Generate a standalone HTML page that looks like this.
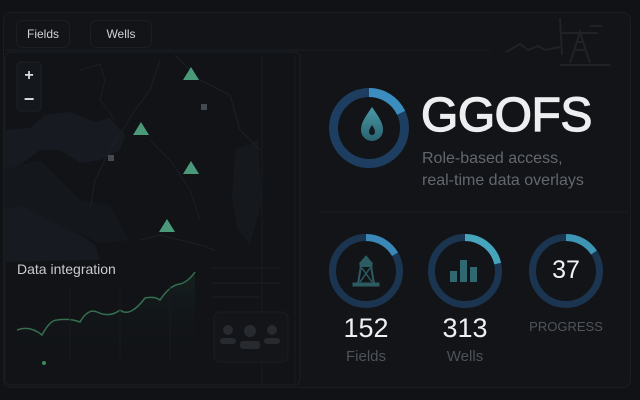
<!DOCTYPE html>
<html><head><meta charset="utf-8"><style>
html,body{margin:0;padding:0;width:640px;height:400px;overflow:hidden;background:#101215;font-family:"Liberation Sans",sans-serif;}
.abs{position:absolute}
</style></head><body>
<div class="abs" style="left:3px;top:12px;width:626px;height:374px;border:1px solid #1a1e23;border-radius:8px;background:#121418"></div>
<svg class="abs" style="left:0;top:0" width="640" height="400" viewBox="0 0 640 400">
  <defs>
    <linearGradient id="dg" x1="0" y1="0" x2="0" y2="1"><stop offset="0" stop-color="#4a9aa6"/><stop offset="1" stop-color="#2a6270"/></linearGradient>
    <linearGradient id="fc" x1="0" y1="0" x2="0" y2="1"><stop offset="0" stop-color="#1b3028" stop-opacity=".45"/><stop offset="1" stop-color="#121418" stop-opacity="0"/></linearGradient>
  </defs>
  <line x1="5" y1="50" x2="490" y2="50" stroke="#181c21"/>
  <rect x="5" y="52" width="295" height="333" rx="6" fill="#111317" stroke="#1b1f25"/>
  <path d="M5 130 L30 128 L45 115 L70 112 L95 122 L110 118 L125 135 L120 150 L100 160 L80 163 L60 150 L40 150 L20 165 L5 170 Z" fill="#171b21"/>
  <path d="M5 210 L25 200 L40 215 L60 225 L80 235 L95 245 L100 260 L5 262 Z" fill="#171b21"/>
  <path d="M5 170 L20 165 L40 160 L60 180 L80 200 L110 205 L120 225 L130 240 L100 243 L70 230 L40 215 L20 205 L5 210 Z" fill="#14171c"/>
  <path d="M235 150 L258 140 L262 200 L250 245 L238 230 L232 200 Z" fill="#15191e"/>
  <path d="M160 60 L150 90 L135 110 L110 150 L95 180 L90 210" fill="none" stroke="#1c2026" stroke-width="1"/>
  <path d="M175 55 L200 80 L230 95 L240 130 L260 150" fill="none" stroke="#1c2026"/>
  <path d="M80 70 L100 64 L105 80 L100 100 L115 120" fill="none" stroke="#1a1e24"/>
  <path d="M140 240 L160 235 L180 240 L200 245 L215 250" fill="none" stroke="#1c2026"/>
  <path d="M150 140 L170 160 L190 190 L200 220" fill="none" stroke="#1a1e24"/>
  <line x1="262" y1="55" x2="262" y2="385" stroke="#181c21"/>
  <line x1="295" y1="55" x2="295" y2="385" stroke="#181c21"/>
  <rect x="17" y="62" width="24" height="49" rx="4" fill="#14171b" stroke="#1d2127"/>
  <text x="29" y="80" fill="#d8dadd" font-size="16" font-weight="bold" text-anchor="middle">+</text>
  <text x="29" y="105" fill="#d8dadd" font-size="18" font-weight="bold" text-anchor="middle">−</text>
  <path d="M191 67 L199 80 L183 80 Z" fill="#4a9a7a"/>
  <path d="M141 122 L149 135 L133 135 Z" fill="#4a9a7a"/>
  <path d="M191 161 L199 174 L183 174 Z" fill="#4a9a7a"/>
  <path d="M167 219 L175 232 L159 232 Z" fill="#4a9a7a"/>
  <rect x="201" y="104" width="6" height="6" fill="#44494f"/>
  <rect x="108" y="155" width="6" height="6" fill="#44494f"/>
  <path d="M17 330 Q30 325 42 335 Q50 320 57 320 Q70 318 80 322 Q88 308 97 312 Q110 318 120 310 Q130 318 145 298 Q155 296 160 300 Q170 285 180 284 Q188 282 195 272 L195 355 L17 355 Z" fill="url(#fc)"/>
  <path d="M17 330 Q30 325 42 335 Q50 320 57 320 Q70 318 80 322 Q88 308 97 312 Q110 318 120 310 Q130 318 145 298 Q155 296 160 300 Q170 285 180 284 Q188 282 195 272" fill="none" stroke="#356f50" stroke-width="1.5"/>
  <line x1="70" y1="285" x2="70" y2="360" stroke="#171a1f"/><line x1="120" y1="285" x2="120" y2="360" stroke="#171a1f"/><line x1="170" y1="285" x2="170" y2="360" stroke="#171a1f"/>
  <circle cx="44" cy="363" r="2" fill="#3a8a58"/>
  <line x1="213" y1="268" x2="280" y2="268" stroke="#1c2026"/>
  <line x1="213" y1="283" x2="280" y2="283" stroke="#1c2026"/>
  <line x1="213" y1="297" x2="260" y2="297" stroke="#1c2026"/>
  <rect x="214" y="312" width="74" height="50" rx="6" fill="#131519" stroke="#1a1e23"/>
  <g fill="#272b30"><circle cx="228" cy="330" r="5"/><rect x="220" y="338" width="16" height="6" rx="3"/>
  <circle cx="250" cy="331" r="6"/><rect x="240" y="341" width="20" height="8" rx="3"/>
  <circle cx="272" cy="330" r="5"/><rect x="264" y="338" width="16" height="6" rx="3"/></g>
  <g stroke="#1f2328" fill="none" stroke-width="2">
    <path d="M506 52 L520 44 L528 50 L538 46 L545 50 L560 47"/>
    <path d="M560 18 L562 55"/><path d="M570 63 L580 32 L590 63 M574 50 L586 50 M576 42 L584 42"/>
    <path d="M560 33 L598 33"/><path d="M590 26 L602 26"/><path d="M560 65 L610 65"/>
  </g>
  <circle cx="369" cy="128" r="35.5" fill="none" stroke="#1d3e60" stroke-width="9"/>
  <circle cx="369" cy="128" r="35.5" fill="none" stroke="#3c8dbf" stroke-width="9" stroke-dasharray="40 223" transform="rotate(-90 369 128)"/>
  <path d="M372 107 C378 116 383 122 383 130 A11 11 0 0 1 361 130 C361 122 366 116 372 107 Z" fill="url(#dg)"/>
  <path d="M372 125 C374 128 375 130 375 132 A3 3 0 0 1 369 132 C369 130 370 128 372 125 Z" fill="#12181c"/>
  <line x1="320" y1="212" x2="628" y2="212" stroke="#181c21"/>
  <g fill="none" stroke-width="7">
    <circle cx="366" cy="271" r="33.5" stroke="#1b3550"/>
    <circle cx="366" cy="271" r="33.5" stroke="#3a88b8" stroke-dasharray="35 200" transform="rotate(-90 366 271)"/>
    <circle cx="465" cy="271" r="33.5" stroke="#1b3550"/>
    <circle cx="465" cy="271" r="33.5" stroke="#46a5bc" stroke-dasharray="45 200" transform="rotate(-90 465 271)"/>
    <circle cx="566" cy="271" r="33.5" stroke="#1b3550"/>
    <circle cx="566" cy="271" r="33.5" stroke="#3f96b4" stroke-dasharray="33 200" transform="rotate(-90 566 271)"/>
  </g>
  <g fill="#2c5c62" stroke="#2c5c62">
    <path d="M366 256 L372 263 L360 263 Z"/><rect x="360" y="263" width="12" height="3"/>
    <path d="M361 266 L371 266 L374 284 L358 284 Z" fill="none" stroke-width="2"/>
    <path d="M362 268 L372 282 M370 268 L360 282" stroke-width="1.5"/>
    <rect x="353" y="283" width="26" height="3"/>
  </g>
  <g fill="#2f6870"><rect x="450" y="271" width="7" height="11"/><rect x="460" y="260" width="7" height="22"/><rect x="470" y="267" width="7" height="15"/></g>
</svg>
<div class="abs" style="left:16px;top:20px;width:52px;height:26px;border:1px solid #1b1f25;border-radius:7px;color:#cfd2d6;font-size:12px;line-height:26px;text-align:center">Fields</div>
<div class="abs" style="left:90px;top:20px;width:60px;height:26px;border:1px solid #1b1f25;border-radius:7px;color:#cfd2d6;font-size:12px;line-height:26px;text-align:center">Wells</div>
<div class="abs" style="left:17px;top:261px;color:#c8cbcf;font-size:14px">Data integration</div>
<div class="abs" style="left:421px;top:91px;color:#eceef0;font-size:48px;-webkit-text-stroke:1.2px #eceef0;letter-spacing:-0.5px;line-height:50px">GGOFS</div>
<div class="abs" style="left:422px;top:148px;color:#63686f;font-size:16px;line-height:22px">Role-based access,<br>real-time data overlays</div>
<div class="abs" style="left:326px;top:313px;width:80px;text-align:center;color:#eef0f2;font-size:27px">152</div>
<div class="abs" style="left:326px;top:348px;width:80px;text-align:center;color:#4e535a;font-size:15px">Fields</div>
<div class="abs" style="left:425px;top:313px;width:80px;text-align:center;color:#eef0f2;font-size:27px">313</div>
<div class="abs" style="left:425px;top:348px;width:80px;text-align:center;color:#4e535a;font-size:15px">Wells</div>
<div class="abs" style="left:526px;top:256px;width:80px;text-align:center;color:#f0f2f4;font-size:25px">37</div>
<div class="abs" style="left:516px;top:319px;width:100px;text-align:center;color:#50555c;font-size:13px">PROGRESS</div>
</body></html>
